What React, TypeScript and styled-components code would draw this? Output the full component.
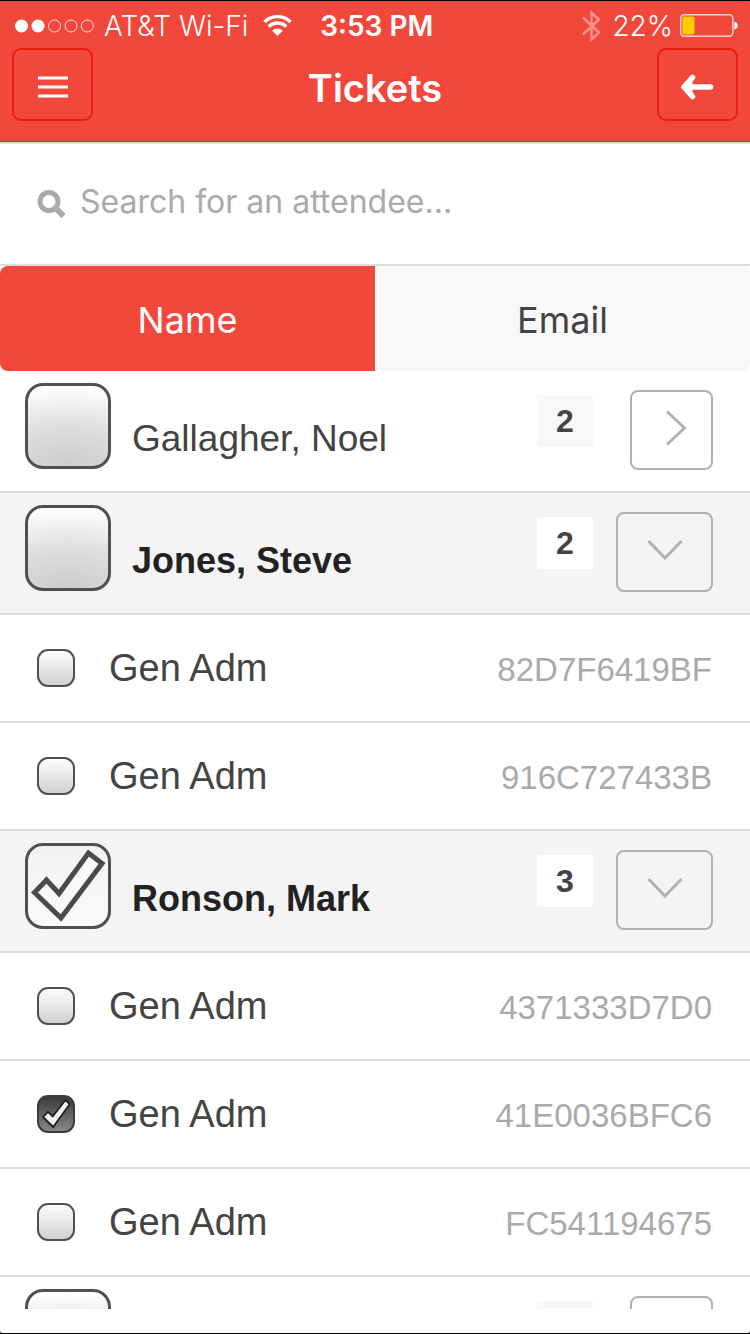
import React, { useState } from "react";
import styled, { createGlobalStyle, css } from "styled-components";

const colors = {
  red: "#f2483b",
  redLine: "#e42012",
  line: "#dddddd",
  soft: "#f8f8f8",
  open: "#f4f4f4",
  text: "#444444",
  strong: "#222222",
  muted: "#aaaaaa",
};

const ui = `Inter, "Liberation Sans", sans-serif`;
const list = `"Liberation Sans", Arial, sans-serif`;

const GlobalStyle = createGlobalStyle`
  *, *::before, *::after { box-sizing: border-box; }
  body { margin: 0; background: #000; font-family: ${list}; }
  button, input { font: inherit; margin: 0; }
`;

const Screen = styled.div`
  display: flex;
  flex-direction: column;
  height: 100vh;
  padding: 1px 0;
  background: #000;
`;

const Body = styled.div`
  display: flex;
  flex-direction: column;
  flex: 1;
  min-height: 0;
  padding-bottom: 24px;
  border-radius: 2px;
  overflow: hidden;
  background: #fff;
`;

const Header = styled.header`
  flex: none;
  background: ${colors.red};
  border-bottom: 1px solid ${colors.redLine};
  color: #fff;
  font-family: ${ui};
`;

const StatusBar = styled.div`
  display: flex;
  align-items: center;
  height: 47px;
  padding: 2px 12px 0 15px;
  font-size: 28px;
  line-height: 32px;
  white-space: nowrap;
`;

const Carrier = styled.span`
  margin: 0 15px 0 10px;
  font-weight: 300;
`;

const Clock = styled.time`
  margin-left: 28px;
  font-weight: 600;
`;

const Power = styled.div`
  display: flex;
  align-items: center;
  gap: 7px;
  margin-left: auto;
  font-weight: 300;
`;

const Charge = styled.span`
  margin-left: 4px;
`;

const NavBar = styled.nav`
  display: flex;
  align-items: center;
  justify-content: space-between;
  padding: 0 12px 20px;
`;

const NavButton = styled.button`
  display: flex;
  align-items: center;
  justify-content: center;
  width: 81px;
  height: 73px;
  padding: 5px 0 0;
  border: 2px solid ${colors.redLine};
  border-radius: 9px;
  background: transparent;
  color: #fff;
`;

const Title = styled.h1`
  margin: 6px 0 0;
  font-size: 38px;
  line-height: 48px;
  font-weight: 600;
`;

const Search = styled.label`
  display: flex;
  flex: none;
  align-items: center;
  gap: 15px;
  height: 124px;
  padding: 0 37px;
  border-top: 2px solid ${colors.line};
  border-bottom: 2px solid ${colors.line};
`;

const SearchInput = styled.input`
  flex: 1;
  min-width: 0;
  padding: 0 0 4px;
  border: 0;
  outline: 0;
  background: transparent;
  color: ${colors.text};
  font-family: ${ui};
  font-size: 32px;
  line-height: 40px;
  &::placeholder { color: ${colors.muted}; opacity: 1; }
`;

const Tabs = styled.div`
  display: flex;
  flex: none;
  height: 105px;
  border-radius: 8px;
  overflow: hidden;
  background: ${colors.soft};
`;

const Tab = styled.button<{ $active: boolean }>`
  flex: 1;
  padding: 2px 0 0;
  border: 0;
  background: ${(p) => (p.$active ? colors.red : "transparent")};
  color: ${(p) => (p.$active ? "#fff" : colors.text)};
  font-family: ${ui};
  font-size: 36px;
  line-height: 48px;
`;

const Attendees = styled.main`
  flex: 1;
  min-height: 0;
  overflow-y: auto;
  scrollbar-width: none;
`;

const GroupRow = styled.div<{ $open: boolean }>`
  display: flex;
  align-items: flex-start;
  height: 122px;
  padding: 12px 37px 0 25px;
  border-bottom: 2px solid ${colors.line};
  background: ${(p) => (p.$open ? colors.open : "#fff")};
`;

const GroupName = styled.label<{ $open: boolean }>`
  flex: 1;
  min-width: 0;
  margin: 32px 0 0 21px;
  color: ${(p) => (p.$open ? colors.strong : colors.text)};
  font-size: ${(p) => (p.$open ? 36 : 37)}px;
  font-weight: ${(p) => (p.$open ? 700 : 400)};
  line-height: 48px;
  overflow: hidden;
  white-space: nowrap;
  text-overflow: ellipsis;
`;

const Count = styled.span`
  width: 56px;
  height: 52px;
  margin-top: 12px;
  background: ${colors.soft};
  color: ${colors.text};
  font-size: 32px;
  font-weight: 700;
  line-height: 53px;
  text-align: center;
  ${GroupRow}[data-open="true"] & { background: #fff; }
`;

const ToggleSlot = styled.div`
  display: flex;
  justify-content: flex-end;
  width: 120px;
  padding-top: 7px;
`;

const Toggle = styled.button<{ $open: boolean }>`
  display: flex;
  align-items: flex-start;
  justify-content: center;
  width: ${(p) => (p.$open ? 97 : 83)}px;
  height: 80px;
  padding: ${(p) => (p.$open ? "25px 0 0" : "18px 0 0 8px")};
  border: 2px solid #b1b1b1;
  border-radius: 8px;
  background: transparent;
`;

const TicketRow = styled.label`
  display: flex;
  align-items: center;
  height: 108px;
  padding: 0 38px 0 37px;
  border-bottom: 2px solid ${colors.line};
  background: #fff;
  color: ${colors.text};
`;

const TicketType = styled.span`
  flex: 1;
  margin-left: 34px;
  font-size: 38px;
  line-height: 48px;
`;

const TicketCode = styled.span`
  padding-top: 4px;
  color: ${colors.muted};
  font-size: 33px;
  line-height: 40px;
`;

const CheckFrame = styled.span`
  display: grid;
  flex: none;
  & > * { grid-area: 1 / 1; }
  & > svg { pointer-events: none; }
`;

const CheckInput = styled.input<{ $large: boolean }>`
  appearance: none;
  ${(p) =>
    p.$large
      ? css`
          width: 86px;
          height: 86px;
          border: 3px solid #505050;
          border-radius: 18px;
          background: radial-gradient(ellipse 180% 100% at 50% 100%, #cccccc 0%, #dedede 50%, #ffffff 100%);
          &:checked { background: linear-gradient(#f2f2f2, #fbfbfb); }
        `
      : css`
          width: 38px;
          height: 38px;
          border: 2px solid #505050;
          border-radius: 11px;
          background: linear-gradient(#fcfcfc, #d2d2d2);
          &:checked {
            border-color: #3c3c3c;
            background: linear-gradient(#3a3a3a, #888888);
          }
        `}
`;

type CheckProps = {
  id: string;
  large?: boolean;
  checked: boolean;
  label?: string;
  onChange: () => void;
};

function Check({ id, large = false, checked, label, onChange }: CheckProps) {
  return (
    <CheckFrame>
      <CheckInput
        type="checkbox"
        id={id}
        aria-label={label}
        $large={large}
        checked={checked}
        onChange={onChange}
      />
      {checked && large && (
        <svg width="86" height="86" viewBox="0 0 86 86" aria-hidden="true">
          <path
            d="M9.5 49.500 21.500 37 34 50.500 63.500 10 77 20.500 36 75Z"
            fill="#f8f8f8"
            stroke="#4a4a4a"
            strokeWidth="5"
          />
        </svg>
      )}
      {checked && !large && (
        <svg width="38" height="38" viewBox="0 0 38 38" aria-hidden="true">
          <path
            d="M6 22 11 16.800 15.700 21.500 28.300 5.300 32.800 9 16.200 32Z"
            fill="#f2f2f2"
            stroke="#1e1e1e"
            strokeWidth="1.800"
          />
        </svg>
      )}
    </CheckFrame>
  );
}

const SignalDots = () => (
  <svg width="79" height="14" viewBox="0 0 79 14" aria-hidden="true">
    <circle cx="6.5" cy="7" r="6.5" fill="#fff" />
    <circle cx="23" cy="7" r="6.5" fill="#fff" />
    {[39.5, 56, 72.3].map((cx) => (
      <circle key={cx} cx={cx} cy="7" r="6" fill="none" stroke="#fff" strokeOpacity=".8" />
    ))}
  </svg>
);

const Wifi = () => (
  <svg width="29" height="22" viewBox="0 0 29 22" aria-hidden="true">
    <g fill="none" stroke="#fff" strokeWidth="3.4">
      <path d="M1.5 7A18.3 18.3 0 0 1 27.5 7" />
      <path d="M5.800 11.700A12.2 12.2 0 0 1 23.200 11.700" />
    </g>
    <path d="M14.500 21 9.200 15.700A7.500 7.500 0 0 1 19.800 15.700Z" fill="#fff" />
  </svg>
);

const Bluetooth = () => (
  <svg width="19" height="32" viewBox="0 0 19 32" aria-hidden="true">
    <path
      d="M1 7.5 17 22.5 9.5 29.5V2.5L17 9.5 1 24.5"
      fill="none"
      stroke="#fff"
      strokeOpacity=".42"
      strokeWidth="2.4"
    />
  </svg>
);

const Battery = () => (
  <svg width="58" height="23" viewBox="0 0 58 23" aria-hidden="true">
    <rect x=".8" y=".8" width="52" height="21.4" rx="3.5" fill="none" stroke="#fff" strokeOpacity=".75" strokeWidth="1.5" />
    <rect x="2.5" y="2.5" width="12" height="18" rx="1.5" fill="#ffcc00" />
    <path d="M54.3 7.5Q57.8 8.5 57.8 11.5T54.3 15.5Z" fill="#fff" />
  </svg>
);

const MenuIcon = () => (
  <svg width="30" height="22" viewBox="0 0 30 22" aria-hidden="true">
    <path d="M0 2H30M0 11H30M0 20H30" stroke="#fff" strokeWidth="3.2" />
  </svg>
);

const BackIcon = () => (
  <svg width="33" height="26" viewBox="0 0 33 26" aria-hidden="true">
    <path
      d="M11.500 3.500 3 13 11.500 22.500"
      fill="#fff"
      stroke="#fff"
      strokeWidth="5.600"
      strokeLinecap="round"
      strokeLinejoin="round"
    />
    <path d="M4 13H29.500" stroke="#fff" strokeWidth="5.600" strokeLinecap="round" />
  </svg>
);

const SearchIcon = () => (
  <svg width="28" height="28" viewBox="0 0 28 28" aria-hidden="true">
    <circle cx="12" cy="11.5" r="9" fill="none" stroke={colors.muted} strokeWidth="5" />
    <path d="M18 17.500 26.500 26" stroke={colors.muted} strokeWidth="6" />
  </svg>
);

const Chevron = ({ open }: { open: boolean }) =>
  open ? (
    <svg width="36" height="22" viewBox="0 0 36 22" aria-hidden="true">
      <path d="M1.5 2 18 19 34.5 2" fill="none" stroke="#b1b1b1" strokeWidth="3" />
    </svg>
  ) : (
    <svg width="22" height="36" viewBox="0 0 22 36" aria-hidden="true">
      <path d="M2 1.5 19.5 18 2 34.5" fill="none" stroke="#b1b1b1" strokeWidth="3" />
    </svg>
  );

type Group = { id: string; name: string; count: string; open: boolean; tickets: string[] };

const groups: Group[] = [
  { id: "gallagher", name: "Gallagher, Noel", count: "2", open: false, tickets: [] },
  { id: "jones", name: "Jones, Steve", count: "2", open: true, tickets: ["82D7F6419BF", "916C727433B"] },
  {
    id: "ronson",
    name: "Ronson, Mark",
    count: "3",
    open: true,
    tickets: ["4371333D7D0", "41E0036BFC6", "FC541194675"],
  },
  { id: "next", name: "", count: "", open: false, tickets: [] },
];

export default function App() {
  const [tab, setTab] = useState("Name");
  const [query, setQuery] = useState("");
  const [opened, setOpened] = useState<string[]>(groups.filter((g) => g.open).map((g) => g.id));
  const [checked, setChecked] = useState<string[]>(["ronson", "41E0036BFC6"]);

  const flip = (items: string[], id: string) =>
    items.includes(id) ? items.filter((item) => item !== id) : [...items, id];

  return (
    <Screen>
      <GlobalStyle />
      <Body>
        <Header>
          <StatusBar>
            <SignalDots />
            <Carrier>AT&amp;T Wi-Fi</Carrier>
            <Wifi />
            <Clock>3:53 PM</Clock>
            <Power>
              <Bluetooth />
              <Charge>22%</Charge>
              <Battery />
            </Power>
          </StatusBar>
          <NavBar>
            <NavButton type="button" aria-label="Menu">
              <MenuIcon />
            </NavButton>
            <Title>Tickets</Title>
            <NavButton type="button" aria-label="Back">
              <BackIcon />
            </NavButton>
          </NavBar>
        </Header>
        <Search>
          <SearchIcon />
          <SearchInput
            type="text"
            aria-label="Search for an attendee"
            placeholder="Search for an attendee..."
            value={query}
            onChange={(e) => setQuery(e.target.value)}
          />
        </Search>
        <Tabs>
          {["Name", "Email"].map((name) => (
            <Tab key={name} type="button" $active={tab === name} aria-pressed={tab === name} onClick={() => setTab(name)}>
              {name}
            </Tab>
          ))}
        </Tabs>
        <Attendees>
          {groups.map((group) => {
            const open = opened.includes(group.id);
            return (
              <section key={group.id}>
                <GroupRow $open={open} data-open={open}>
                  <Check
                    id={group.id}
                    large
                    label={group.name ? undefined : "Attendee"}
                    checked={checked.includes(group.id)}
                    onChange={() => setChecked(flip(checked, group.id))}
                  />
                  <GroupName htmlFor={group.id} $open={open}>
                    {group.name}
                  </GroupName>
                  <Count>{group.count}</Count>
                  <ToggleSlot>
                    <Toggle
                      type="button"
                      $open={open}
                      aria-label="Show tickets"
                      aria-expanded={open}
                      onClick={() => setOpened(flip(opened, group.id))}
                    >
                      <Chevron open={open} />
                    </Toggle>
                  </ToggleSlot>
                </GroupRow>
                {open &&
                  group.tickets.map((code) => (
                    <TicketRow key={code} htmlFor={code}>
                      <Check
                        id={code}
                        checked={checked.includes(code)}
                        onChange={() => setChecked(flip(checked, code))}
                      />
                      <TicketType>Gen Adm</TicketType>
                      <TicketCode>{code}</TicketCode>
                    </TicketRow>
                  ))}
              </section>
            );
          })}
        </Attendees>
      </Body>
    </Screen>
  );
}
